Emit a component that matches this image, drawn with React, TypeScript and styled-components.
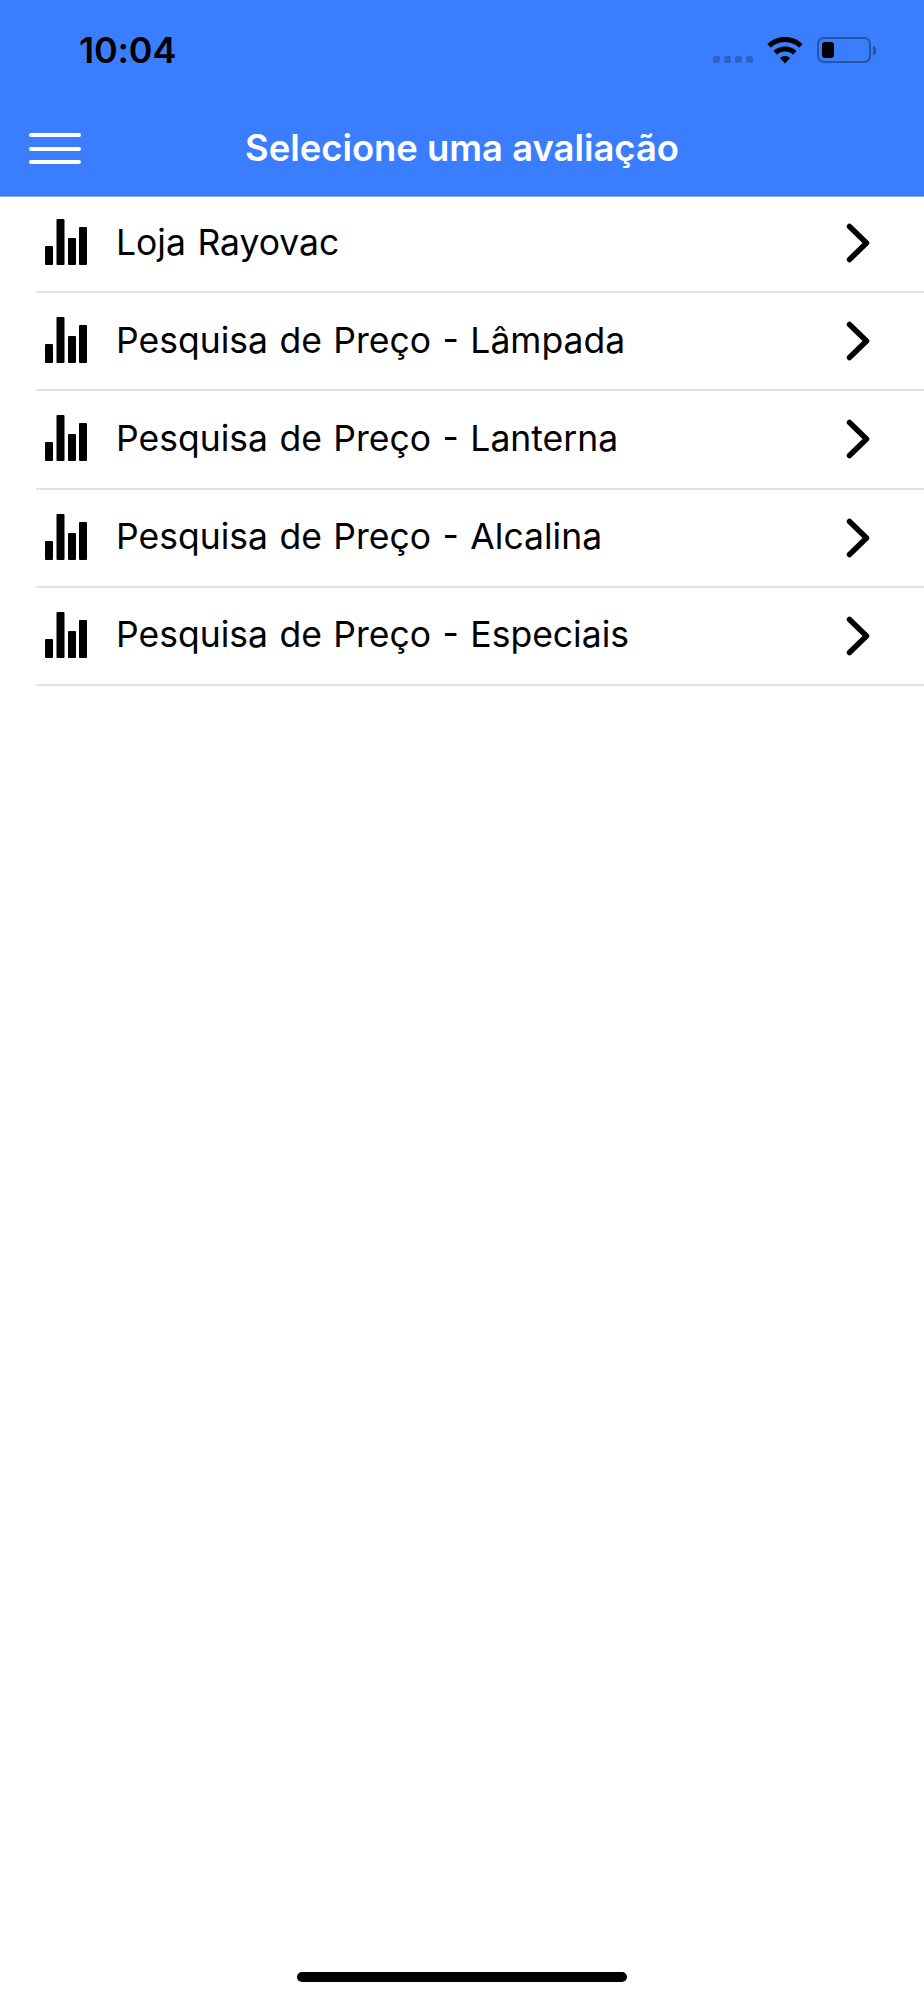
import React from 'react';
import styled, { createGlobalStyle } from 'styled-components';

const GlobalStyle = createGlobalStyle`
  html, body {
    margin: 0;
    padding: 0;
    background: #fff;
  }
  body {
    font-family: Inter, "Liberation Sans", sans-serif;
  }
`;

const Page = styled.div`
  display: flex;
  flex-direction: column;
  width: 924px;
  height: 2000px;
  background: #fff;
  overflow: hidden;
`;

const Header = styled.header`
  height: 195px;
  background: #3a7eff;
  box-shadow: 0 1px 0 #3274ea, 0 2px 0 #8fb5fb;
  display: flex;
  flex-direction: column;
`;

const StatusBar = styled.div`
  height: 100px;
  box-sizing: border-box;
  display: flex;
  align-items: center;
  justify-content: space-between;
  padding: 0 48px 0 79px;
`;

const Time = styled.span`
  font-size: 36px;
  font-weight: 600;
  color: #000;
  letter-spacing: -0.2px;
`;

const StatusIcons = styled.div`
  display: flex;
  align-items: center;
`;

const SignalDots = styled.div`
  display: flex;
  gap: 4px;
  margin-right: 14px;
  margin-top: 19px;
`;

const SignalDot = styled.span`
  width: 7px;
  height: 7px;
  border-radius: 2px;
  background: #2b62c6;
`;

const Battery = styled.div`
  display: flex;
  align-items: center;
  margin-left: 14px;
`;

const BatteryBody = styled.div`
  width: 54px;
  height: 26px;
  box-sizing: border-box;
  border: 2px solid #27559f;
  border-radius: 7px;
  padding: 3px;
  display: flex;
`;

const BatteryLevel = styled.span`
  width: 12px;
  background: #000;
  border-radius: 3px;
`;

const BatteryCap = styled.span`
  width: 3px;
  height: 9px;
  margin-left: 2px;
  background: #27559f;
  border-radius: 0 3px 3px 0;
`;

const NavBar = styled.div`
  flex: 1;
  position: relative;
  display: flex;
  align-items: center;
  justify-content: center;
`;

const MenuButton = styled.button`
  position: absolute;
  left: 29px;
  top: 33px;
  width: 52px;
  height: 31px;
  padding: 0;
  border: 0;
  background: none;
  display: flex;
  flex-direction: column;
  justify-content: space-between;
`;

const MenuLine = styled.span`
  height: 4px;
  background: #fff;
  border-radius: 2px;
`;

const Title = styled.h1`
  margin: 0;
  font-size: 36.4px;
  font-weight: 600;
  color: #fff;
`;

const List = styled.ul`
  flex: 1;
  margin: 0;
  padding: 0;
  list-style: none;
`;

const Row = styled.li`
  height: 98.2px;
  box-sizing: border-box;
  margin-left: 36px;
  padding: 0 54px 0 9px;
  display: flex;
  align-items: center;
  border-bottom: 2px solid #e2e2e2;
`;

const RowLabel = styled.span`
  flex: 1;
  margin-left: 29px;
  margin-bottom: 2px;
  font-size: 35.5px;
  word-spacing: 1.5px;
  color: #000;
`;

const BarsSvg = styled.svg`
  margin-bottom: 2px;
`;

const HomeBar = styled.div`
  display: flex;
  justify-content: center;
  padding-bottom: 18px;
`;

const HomeIndicator = styled.span`
  width: 330px;
  height: 10px;
  border-radius: 5px;
  background: #000;
`;

const WifiIcon = () => (
  <svg width="36" height="27" viewBox="0 0 36 27">
    <path
      d="M18 0C11.2 0 5 2.6.4 7l3.4 3.7C7.5 7.2 12.5 5 18 5s10.5 2.2 14.2 5.7L35.600 7C31 2.600 24.800 0 18 0z"
      fill="#000"
    />
    <path
      d="M18 9.500c-4.500 0-8.500 1.700-11.500 4.500l3.500 3.700c2.100-2 4.900-3.200 8-3.200s5.900 1.200 8 3.200l3.500-3.700C26.500 11.200 22.500 9.500 18 9.500z"
      fill="#000"
    />
    <path d="M18 19c-2 0-3.800.8-5.100 2L18 26.500 23.100 21C21.800 19.800 20 19 18 19z" fill="#000" />
  </svg>
);

const BarsIcon = () => (
  <BarsSvg width="42" height="46" viewBox="0 0 42 46">
    <rect x="0" y="27" width="8" height="19" rx="1" fill="#000" />
    <rect x="11.500" y="0" width="8" height="46" rx="1" fill="#000" />
    <rect x="23" y="19" width="8" height="27" rx="1" fill="#000" />
    <rect x="34" y="8" width="8" height="38" rx="1" fill="#000" />
  </BarsSvg>
);

const ChevronIcon = () => (
  <svg width="24" height="40" viewBox="0 0 24 40">
    <path
      d="M3.500 3.500L20.500 20L3.500 36.500"
      fill="none"
      stroke="#000"
      strokeWidth="5.500"
      strokeLinecap="round"
      strokeLinejoin="round"
    />
  </svg>
);

const items = [
  'Loja Rayovac',
  'Pesquisa de Preço - Lâmpada',
  'Pesquisa de Preço - Lanterna',
  'Pesquisa de Preço - Alcalina',
  'Pesquisa de Preço - Especiais',
];

export default function App() {
  return (
    <Page>
      <GlobalStyle />
      <Header>
        <StatusBar>
          <Time>10:04</Time>
          <StatusIcons>
            <SignalDots>
              <SignalDot />
              <SignalDot />
              <SignalDot />
              <SignalDot />
            </SignalDots>
            <WifiIcon />
            <Battery>
              <BatteryBody>
                <BatteryLevel />
              </BatteryBody>
              <BatteryCap />
            </Battery>
          </StatusIcons>
        </StatusBar>
        <NavBar>
          <MenuButton aria-label="Menu">
            <MenuLine />
            <MenuLine />
            <MenuLine />
          </MenuButton>
          <Title>Selecione uma avaliação</Title>
        </NavBar>
      </Header>
      <List>
        {items.map(item => (
          <Row key={item}>
            <BarsIcon />
            <RowLabel>{item}</RowLabel>
            <ChevronIcon />
          </Row>
        ))}
      </List>
      <HomeBar>
        <HomeIndicator />
      </HomeBar>
    </Page>
  );
}
